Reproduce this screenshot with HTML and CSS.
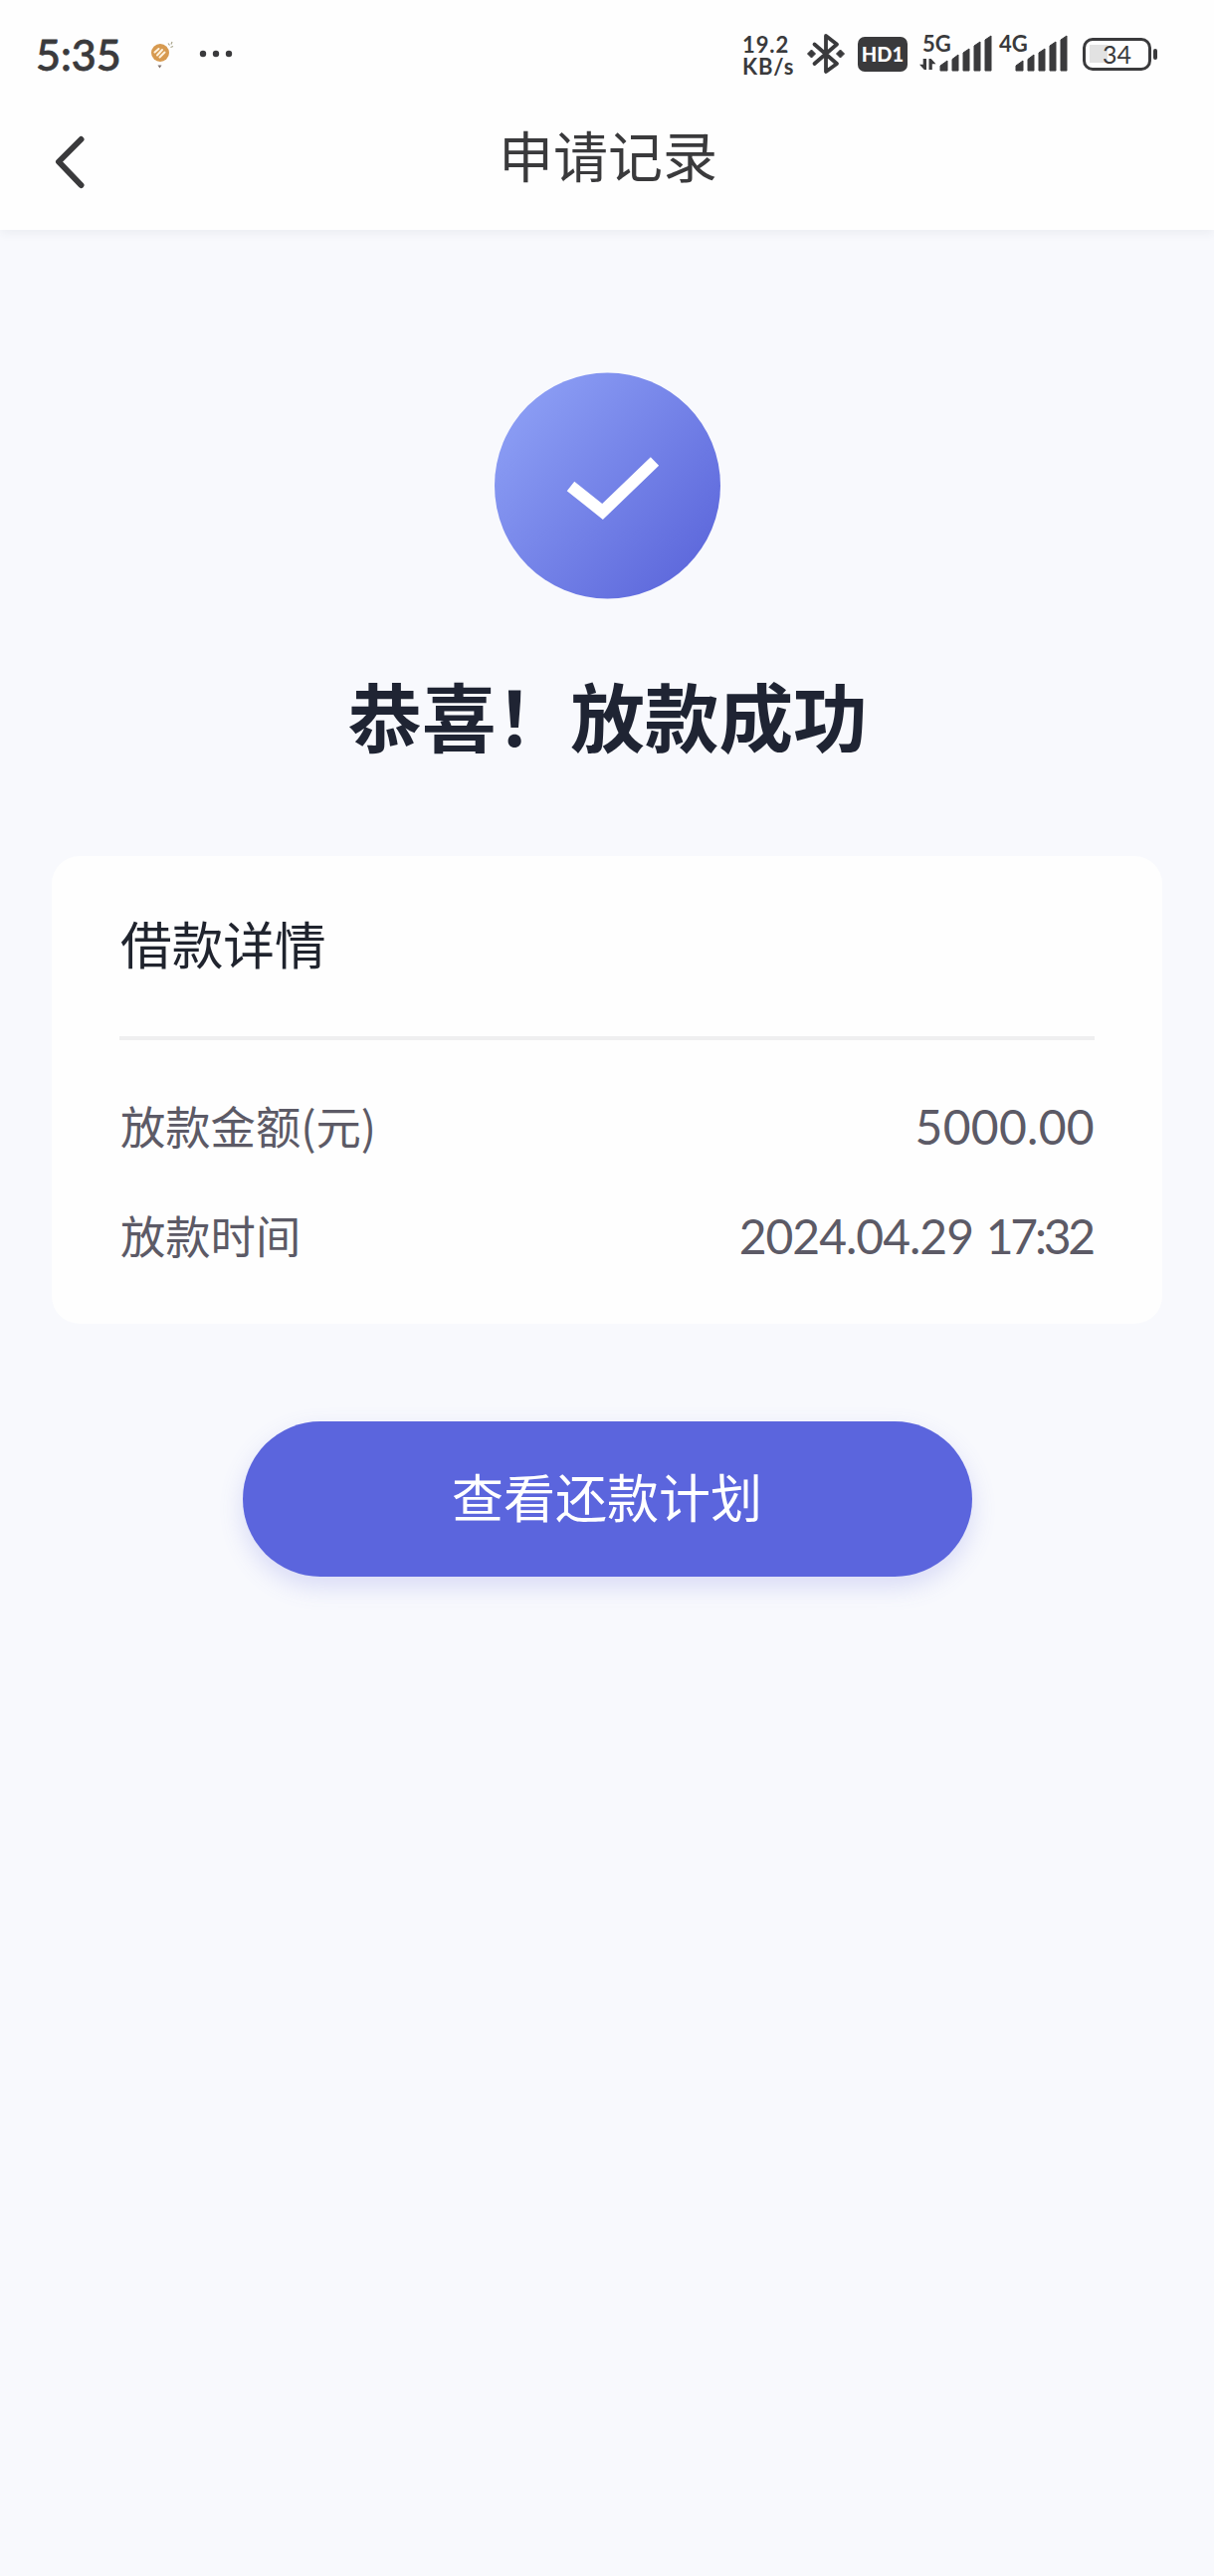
FILE: index.html
```html
<!DOCTYPE html>
<html lang="zh-CN">
<head>
<meta charset="utf-8">
<title>申请记录</title>
<link rel="stylesheet" href="styles.css">
</head>
<body>
<header class="top">
  <div class="status">
    <span class="clock">5:35</span>
    <svg class="app-icon" width="32" height="40" viewBox="0 0 32 40">
      <circle cx="17" cy="19" r="9" fill="#d79a50"/>
      <path d="M11.500 18.500l4-3.500M14 21.500l5-5.500M16.500 23.500l5-5" stroke="#fff3df" stroke-width="2" stroke-linecap="round"/>
      <path d="M25 9.500l1.500 2M29 8l-1 2.500M27.500 13.500l2.500-1" stroke="#a9a58c" stroke-width="1.200"/>
      <path d="M14.500 31.500h4l-2 3z" fill="#80706d"/>
    </svg>
    <svg class="dots" width="34" height="8" viewBox="0 0 34 8" fill="#3a3a3c">
      <circle cx="4" cy="4" r="3.200"/><circle cx="17" cy="4" r="3.200"/><circle cx="30" cy="4" r="3.200"/>
    </svg>
    <div class="speed"><span>19.2</span><span>KB/s</span></div>
    <svg class="bluetooth" width="40" height="44" viewBox="0 0 40 44">
      <path d="M8.500 12.500L31 32 20 40V4l11 8.500L8.500 32" fill="none" stroke="#3a3a3c" stroke-width="3.800" stroke-linejoin="round" stroke-linecap="round"/>
      <path d="M5.500 18l4 4-4 4-4-4zM34.500 18l4 4-4 4-4-4z" fill="#3a3a3c" stroke="#3a3a3c" stroke-linejoin="round"/>
    </svg>
    <span class="hd">HD1</span>
    <div class="signal signal-5g">
      <svg width="74" height="38" viewBox="0 0 74 38" fill="#3a3a3c">
        <path d="M7 24v11h-2.200L0 29.800h3.700V24zM9.500 35V24h2.200l4.800 5.200h-3.700V35z"/>
        <path d="M21 31l7-5v10h-7zM33 24.500l6-4.500v16h-6zM44 18l6-4v22h-6zM55 11l6-4v29h-6zM66 5l6-4v35h-6z" stroke="#3a3a3c" stroke-linejoin="round"/>
      </svg>
      <span class="network">5G</span>
    </div>
    <div class="signal signal-4g">
      <svg width="74" height="38" viewBox="0 0 74 38" fill="#3a3a3c">
        <path d="M20 31l7-5v10h-7zM32 24.500l6-4.500v16h-6zM43 18l6-4v22h-6zM54 11l6-4v29h-6zM65 5l6-4v35h-6z" stroke="#3a3a3c" stroke-linejoin="round"/>
      </svg>
      <span class="network">4G</span>
    </div>
    <div class="battery"><span class="battery-body">34</span><i class="battery-tip"></i></div>
  </div>
  <nav class="nav">
    <svg class="back" width="32" height="54" viewBox="0 0 32 54">
      <path d="M26.500 4L4 26.500 26.500 50" fill="none" stroke="#3a3a3c" stroke-width="6" stroke-linecap="round" stroke-linejoin="round"/>
    </svg>
    <h1 class="nav-title">申请记录</h1>
  </nav>
</header>
<main class="content">
  <svg class="success" width="228" height="228" viewBox="0 0 228 228">
    <defs>
      <linearGradient id="disc" x1="0.100" y1="0.150" x2="0.900" y2="0.850">
        <stop offset="0" stop-color="#8b9df4"/><stop offset="1" stop-color="#5e69dc"/>
      </linearGradient>
    </defs>
    <circle cx="114.500" cy="114" r="113.500" fill="url(#disc)"/>
    <path d="M77.500 114.500L109.500 140 162 89.500" fill="none" stroke="#fff" stroke-width="12"/>
  </svg>
  <h2 class="headline">恭喜！放款成功</h2>
  <section class="card">
    <h3 class="card-title">借款详情</h3>
    <div class="row"><span>放款金额(元)</span><span class="value">5000.00</span></div>
    <div class="row"><span>放款时间</span><span class="value"><span class="date">2024.04.29</span> <span class="hour">17:32</span></span></div>
  </section>
  <button class="plan" type="button">查看还款计划</button>
</main>
</body>
</html>
```
FILE: styles.css
```css
* { box-sizing: border-box; }

body {
  margin: 0;
  min-height: 2588px;
  background: #f8f9fd;
  color: #3a3a3c;
  font-family: "Noto Sans CJK SC", sans-serif;
}

h1, h2, h3 { margin: 0; font-weight: 400; }

svg { display: block; flex: none; }

.top {
  height: 231px;
  background: #fefefe;
  box-shadow: 0 3px 10px rgba(60, 65, 90, 0.07);
}

.status {
  display: flex;
  align-items: center;
  height: 108px;
  padding-left: 36px;
  font-family: Lato, sans-serif;
}

.clock {
  width: 108px;
  font-size: 43px;
  font-weight: 500;
  line-height: 1;
  -webkit-text-stroke: 0.8px #3a3a3c;
}

.dots { margin-left: 24px; }

.speed {
  display: flex;
  flex-direction: column;
  width: 64px;
  margin-left: 512px;
  padding-top: 3px;
  font-size: 22px;
  font-weight: 700;
  line-height: 22px;
  letter-spacing: 0.9px;
}

.hd {
  width: 50px;
  height: 35px;
  margin-left: 12px;
  border-radius: 7px;
  background: #3a3a3c;
  color: #fff;
  font-size: 20px;
  font-weight: 900;
  line-height: 35px;
  text-align: center;
}

.signal { position: relative; }
.signal-5g { margin-left: 12px; }
.signal-4g { margin-left: 3px; }

.network {
  position: absolute;
  top: -5px;
  left: 3px;
  font-size: 22px;
  font-weight: 700;
  line-height: 28px;
}

.battery {
  display: flex;
  align-items: center;
  gap: 2px;
  margin-left: 13px;
}

.battery-body {
  width: 69px;
  height: 33px;
  border: 3.5px solid #3a3a3c;
  border-radius: 10px;
  background: linear-gradient(#e2e2e2, #e2e2e2) 4px 4px / 18px 18px no-repeat;
  font-size: 25px;
  line-height: 26px;
  text-align: center;
}

.battery-tip {
  width: 4px;
  height: 11px;
  border-radius: 2px;
  background: #3a3a3c;
}

.nav {
  display: grid;
  grid-template-columns: 1fr auto 1fr;
  align-items: center;
  height: 110px;
}

.back { margin-left: 55px; }

.nav-title {
  margin: -18px 0 0 2px;
  font-size: 55px;
  line-height: 110px;
}

.content {
  display: flex;
  flex-direction: column;
  align-items: center;
  padding: 143px 52px 0;
}

.headline {
  margin-top: 59px;
  padding-left: 1px;
  color: #1f2433;
  font-size: 74.6px;
  font-weight: 700;
  line-height: 112px;
}

.card {
  align-self: stretch;
  height: 470px;
  margin-top: 87px;
  padding: 0 68px;
  border-radius: 28px;
  background: #fefefe;
}

.card-title {
  height: 185px;
  margin-bottom: 30px;
  padding-left: 1px;
  border-bottom: 4px solid #efeff0;
  color: #20242e;
  font-size: 51.7px;
  line-height: 173px;
}

.row {
  display: flex;
  justify-content: space-between;
  height: 110px;
  padding-left: 1px;
  color: #5c5a66;
  font-size: 45.3px;
  line-height: 110px;
}

.value {
  padding-top: 2px;
  font-family: Lato, sans-serif;
  font-size: 48px;
  letter-spacing: 0.3px;
}

.date { letter-spacing: -1px; }
.hour { margin-right: 2px; letter-spacing: -3.2px; }

.plan {
  width: 733px;
  height: 156px;
  margin-top: 98px;
  padding: 0 0 6px;
  border: 0;
  border-radius: 78px;
  background: #5b65dd;
  box-shadow: 0 10px 24px rgba(91, 101, 221, 0.2);
  color: #fff;
  font: 52px/150px "Noto Sans CJK SC", sans-serif;
}
```
